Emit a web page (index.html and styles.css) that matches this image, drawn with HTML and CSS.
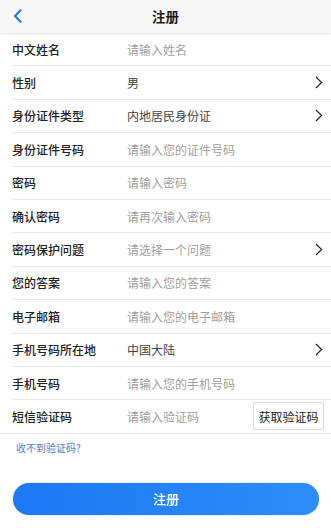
FILE: index.html
```html
<!DOCTYPE html>
<html lang="zh">
<head>
<meta charset="utf-8">
<link rel="stylesheet" href="styles.css">
</head>
<body>
<div class="page">
  <header class="nav">
    <span class="back">
      <svg width="9" height="14" viewBox="0 0 9 14"><path d="M7.5 1.2 L2 7 L7.5 12.8" fill="none" stroke="#1a73f0" stroke-width="2" stroke-linecap="round" stroke-linejoin="round"/></svg>
    </span>
    <h1 class="title">注册</h1>
  </header>
  <div class="form">
    <div class="row"><span class="label">中文姓名</span><span class="value ph">请输入姓名</span></div>
    <div class="row"><span class="label">性别</span><span class="value">男</span><span class="arrow"><svg width="8" height="13" viewBox="0 0 8 13"><path d="M1 1 L6.6 6.5 L1 12" fill="none" stroke="#222" stroke-width="1.2"/></svg></span></div>
    <div class="row"><span class="label">身份证件类型</span><span class="value">内地居民身份证</span><span class="arrow"><svg width="8" height="13" viewBox="0 0 8 13"><path d="M1 1 L6.6 6.5 L1 12" fill="none" stroke="#222" stroke-width="1.2"/></svg></span></div>
    <div class="row"><span class="label">身份证件号码</span><span class="value ph">请输入您的证件号码</span></div>
    <div class="row"><span class="label">密码</span><span class="value ph">请输入密码</span></div>
    <div class="row"><span class="label">确认密码</span><span class="value ph">请再次输入密码</span></div>
    <div class="row"><span class="label">密码保护问题</span><span class="value ph">请选择一个问题</span><span class="arrow"><svg width="8" height="13" viewBox="0 0 8 13"><path d="M1 1 L6.6 6.5 L1 12" fill="none" stroke="#222" stroke-width="1.2"/></svg></span></div>
    <div class="row"><span class="label">您的答案</span><span class="value ph">请输入您的答案</span></div>
    <div class="row"><span class="label">电子邮箱</span><span class="value ph">请输入您的电子邮箱</span></div>
    <div class="row"><span class="label">手机号码所在地</span><span class="value">中国大陆</span><span class="arrow"><svg width="8" height="13" viewBox="0 0 8 13"><path d="M1 1 L6.6 6.5 L1 12" fill="none" stroke="#222" stroke-width="1.2"/></svg></span></div>
    <div class="row"><span class="label">手机号码</span><span class="value ph">请输入您的手机号码</span></div>
    <div class="row last"><span class="label">短信验证码</span><span class="value ph">请输入验证码</span><button class="code-btn">获取验证码</button></div>
  </div>
  <div class="help">收不到验证码?</div>
  <div class="submit-wrap"><button class="submit">注册</button></div>
</div>
</body>
</html>
```
FILE: styles.css
```css
* { box-sizing: border-box; }
html, body {
  margin: 0;
  padding: 0;
  background: #fff;
  font-family: "Noto Sans CJK SC", "Noto Sans", sans-serif;
}
.page {
  width: 331px;
  height: 528px;
  overflow: hidden;
  display: flex;
  flex-direction: column;
}
.nav {
  height: 33px;
  flex: none;
  background: #f7f7f7;
  display: flex;
  align-items: center;
  justify-content: center;
  position: relative;
  box-shadow: 0 1px 2px rgba(0,0,0,0.12);
  z-index: 1;
}
.back {
  position: absolute;
  left: 13px;
  top: 9px;
  display: flex;
}
.title {
  margin: 0;
  font-size: 13.5px;
  font-weight: 700;
  color: #1a1a1a;
  line-height: 1;
}
.form {
  display: flex;
  flex-direction: column;
}
.row {
  height: 33.4px;
  margin-left: 12px;
  border-bottom: 1px solid #e9e9e9;
  display: flex;
  align-items: center;
  position: relative;
}
.row.last {
  margin-left: 0;
  padding-left: 12px;
}
.label {
  width: 115px;
  flex: none;
  font-size: 12px;
  font-weight: 500;
  color: #222;
}
.value {
  flex: 1;
  font-size: 12px;
  color: #444;
}
.value.ph {
  color: #a0a0a0;
}
.arrow {
  width: 8px;
  margin-right: 8px;
  display: flex;
  align-items: center;
}
.code-btn {
  width: 71px;
  height: 28px;
  margin-right: 7px;
  border: 1px solid #dcdcdc;
  border-radius: 3px;
  background: #fff;
  font-family: inherit;
  font-size: 12px;
  color: #222;
  padding: 0;
  box-shadow: 0 0 1px rgba(0,0,0,0.05);
}
.help {
  margin: 7px 0 0 16px;
  font-size: 10px;
  color: #4f7dc5;
  line-height: 14px;
}
.submit-wrap {
  padding: 0 12px 0 13px;
  margin-top: 28px;
}
.submit {
  width: 100%;
  height: 32px;
  border: none;
  border-radius: 16px;
  background: linear-gradient(90deg, #1d78f4 0%, #2b8ef8 100%);
  color: #fff;
  font-family: inherit;
  font-size: 13px;
  font-weight: 500;
  box-shadow: 0 0 2px rgba(30,100,200,0.35);
  padding: 0;
}
```
